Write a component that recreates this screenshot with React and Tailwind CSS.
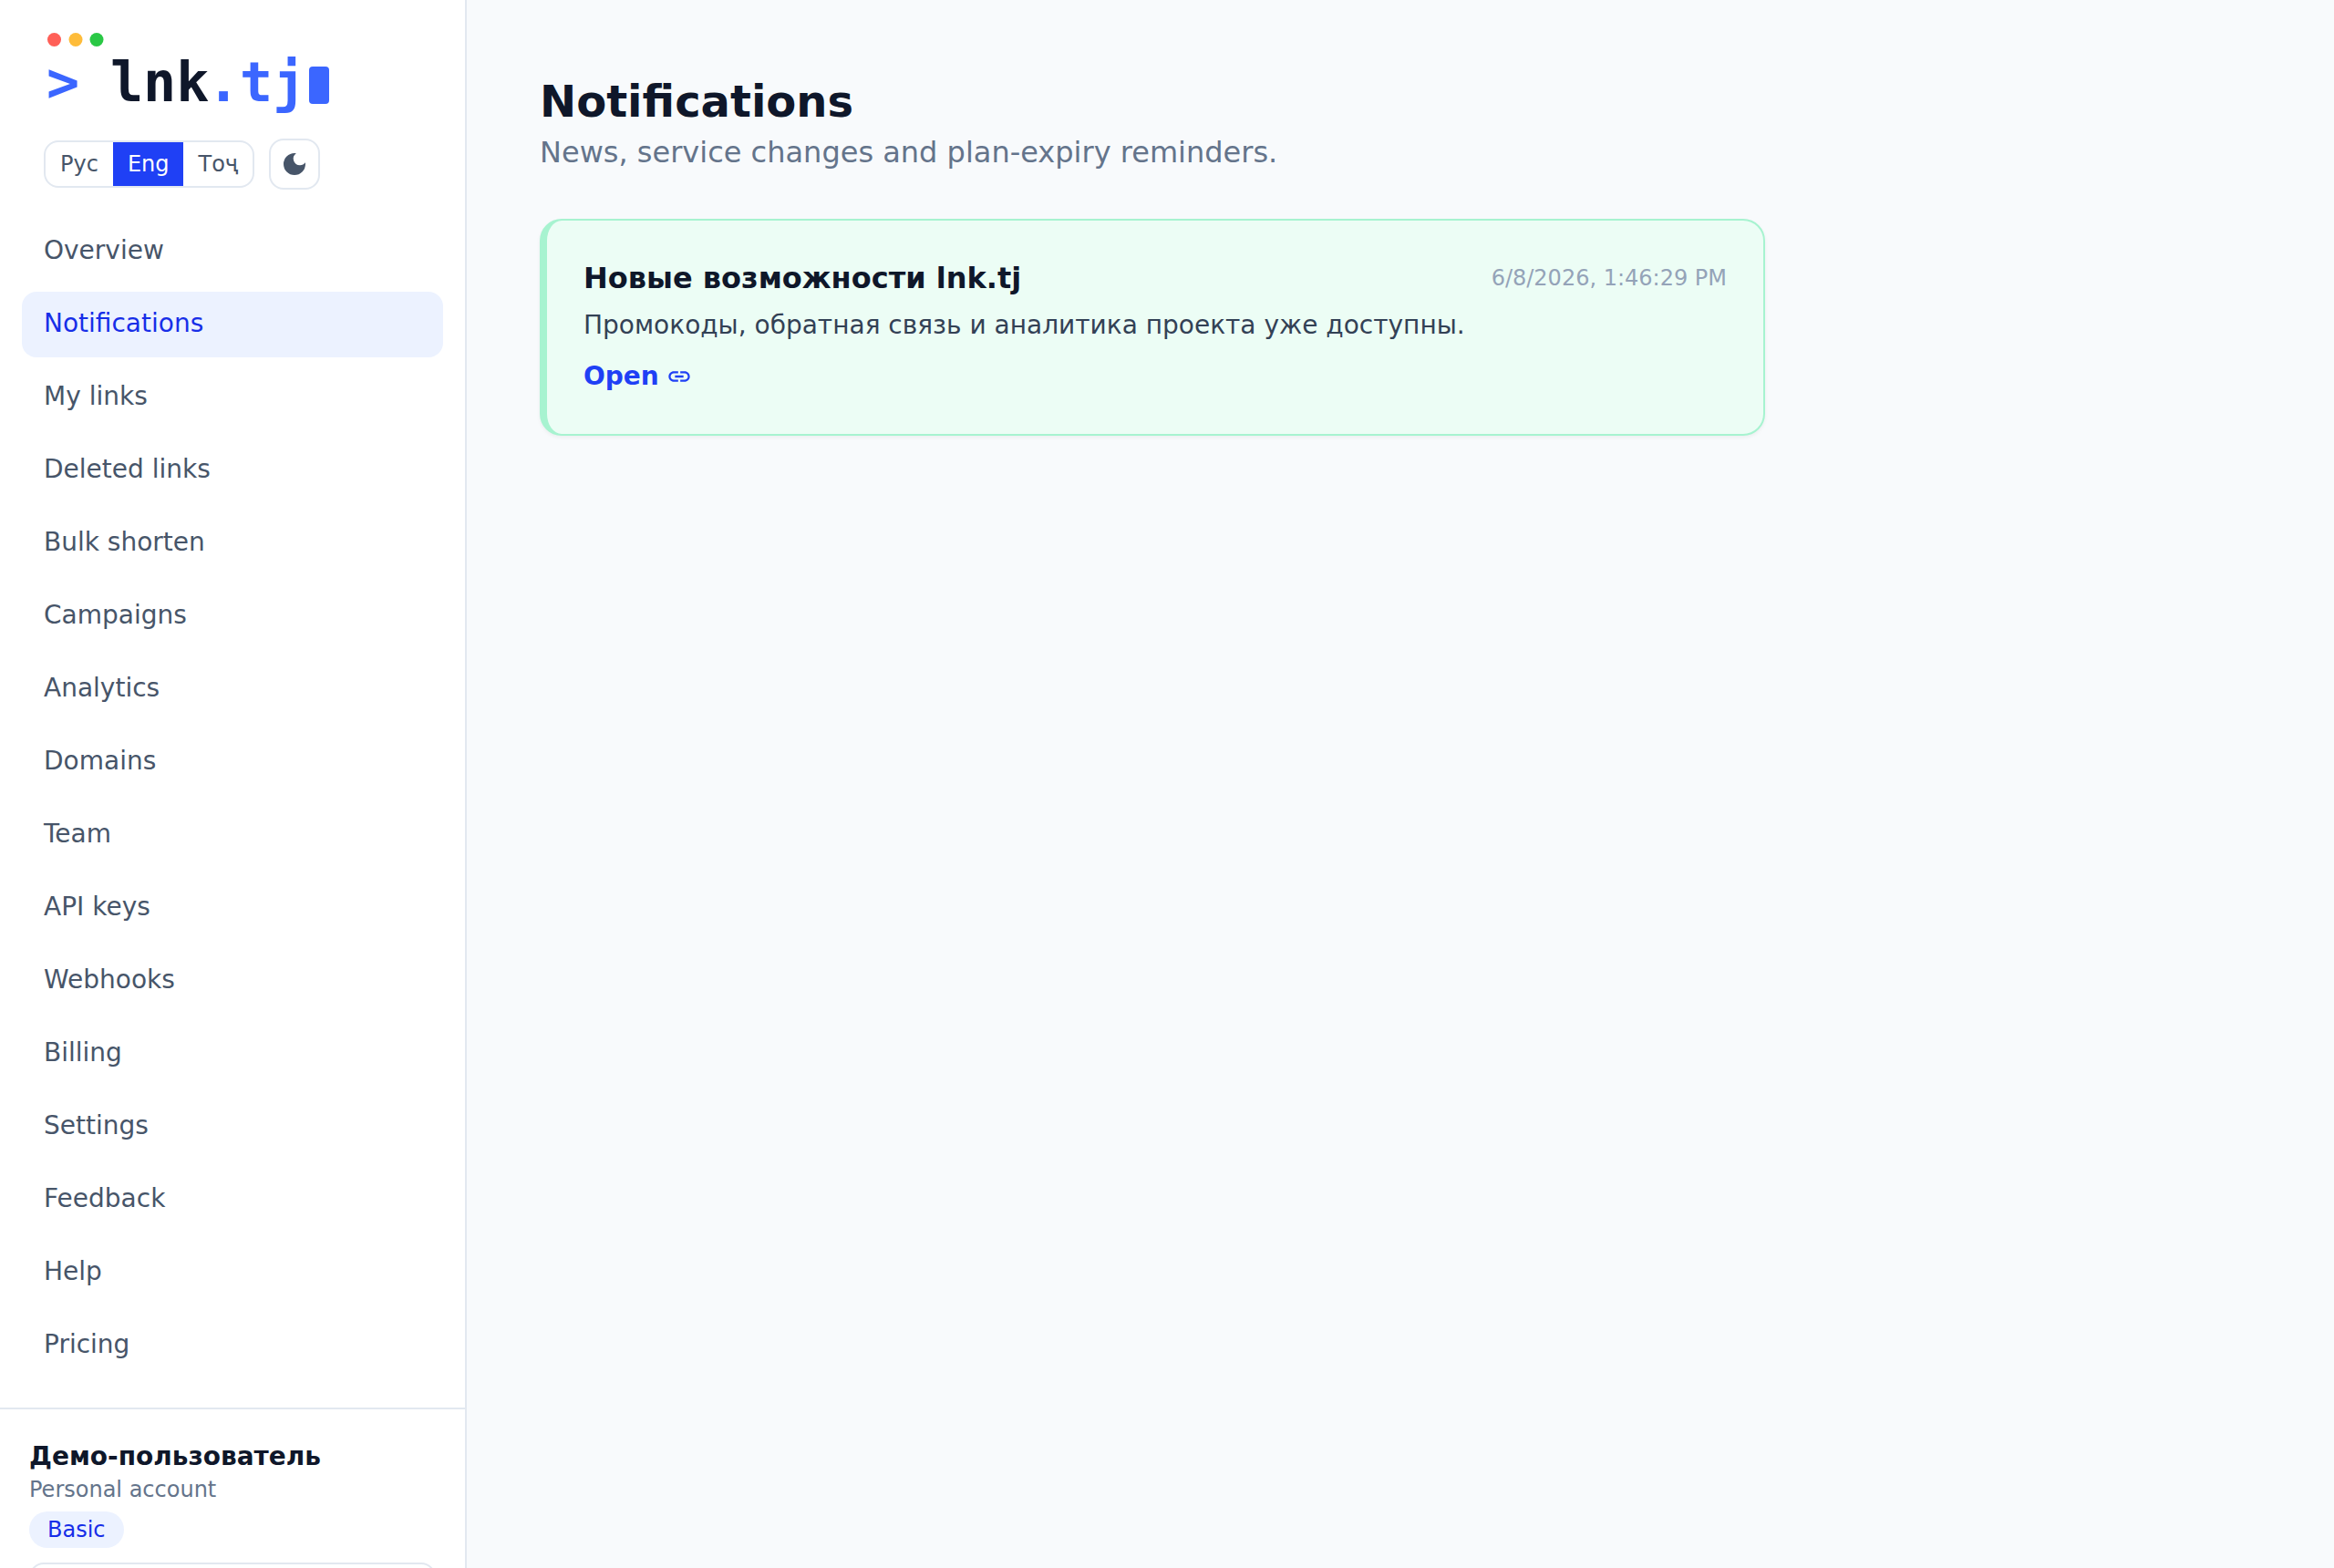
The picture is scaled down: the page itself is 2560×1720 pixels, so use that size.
import React from "react";

const NAV_ITEMS = [
  "Overview",
  "Notifications",
  "My links",
  "Deleted links",
  "Bulk shorten",
  "Campaigns",
  "Analytics",
  "Domains",
  "Team",
  "API keys",
  "Webhooks",
  "Billing",
  "Settings",
  "Feedback",
  "Help",
  "Pricing",
];

const LANGUAGES = ["Рус", "Eng", "Тоҷ"];

function Logo() {
  return (
    <a href="#home" aria-label="lnk.tj" className="flex w-fit">
      <svg
        width="320"
        height="104"
        viewBox="0 0 320 104"
        className="font-['DejaVu_Sans_Mono',monospace] text-[60px] font-bold"
      >
        <circle cx="11.5" cy="19.5" r="7.5" fill="#ff5f57" />
        <circle cx="35" cy="19.5" r="7.5" fill="#febc3a" />
        <circle cx="58" cy="19.5" r="7.5" fill="#2ac845" />
        <text x="3" y="87" fill="#3b66ff">&gt;</text>
        <text x="73" y="87" fill="#0f172a">lnk</text>
        <text x="179" y="87" fill="#3b66ff">.tj</text>
        <rect x="291" y="49" width="22" height="41" rx="4" fill="#3b66ff" />
      </svg>
    </a>
  );
}

function MoonIcon() {
  return (
    <svg viewBox="0 0 24 24" className="size-8" fill="currentColor" aria-hidden="true">
      <path d="M12 3a9 9 0 1 0 9 9c0-.46-.04-.92-.1-1.36a5.389 5.389 0 0 1-4.4 2.26 5.403 5.403 0 0 1-3.14-9.8c-.44-.06-.9-.1-1.36-.1z" />
    </svg>
  );
}

function LinkIcon() {
  return (
    <svg viewBox="0 0 24 24" className="size-7" fill="currentColor" aria-hidden="true">
      <path d="M3.9 12c0-1.71 1.39-3.1 3.1-3.1h4V7H7c-2.76 0-5 2.24-5 5s2.24 5 5 5h4v-1.9H7c-1.71 0-3.1-1.39-3.1-3.1zM8 13h8v-2H8v2zm9-6h-4v1.9h4c1.71 0 3.1 1.39 3.1 3.1s-1.39 3.1-3.1 3.1h-4V17h4c2.76 0 5-2.24 5-5s-2.24-5-5-5z" />
    </svg>
  );
}

function Sidebar() {
  return (
    <aside className="flex w-[512px] shrink-0 flex-col overflow-hidden border-r-2 border-[#e2e8f0] bg-white">
      <div className="flex shrink-0 flex-col gap-4 px-12 pt-6 pb-8">
        <Logo />
        <div className="flex items-center gap-4 pt-2">
          <div className="flex overflow-hidden rounded-2xl border-2 border-[#e2e8f0] text-[24px] leading-8">
            {LANGUAGES.map((lang) => (
              <button
                key={lang}
                type="button"
                className={
                  lang === "Eng"
                    ? "bg-[#1f40f5] px-4 py-2 text-white"
                    : "px-4 py-2 text-[#475569]"
                }
              >
                {lang}
              </button>
            ))}
          </div>
          <button
            type="button"
            aria-label="Dark theme"
            className="flex size-14 items-center justify-center rounded-2xl border-2 border-[#e2e8f0] text-[#475569]"
          >
            <MoonIcon />
          </button>
        </div>
      </div>
      <nav className="flex shrink-0 flex-col gap-2 px-6 pb-8">
        {NAV_ITEMS.map((item) => (
          <a
            key={item}
            href="#nav"
            className={
              item === "Notifications"
                ? "rounded-2xl bg-[#ecf2ff] px-6 pt-[15px] pb-[17px] text-[28px] leading-10 text-[#172ee8]"
                : "rounded-2xl px-6 pt-[15px] pb-[17px] text-[28px] leading-10 text-[#475569]"
            }
          >
            {item}
          </a>
        ))}
      </nav>
      <div className="flex shrink-0 flex-col border-t-2 border-[#e2e8f0] p-8">
        <p className="text-[28px] leading-10 font-bold text-[#0f172a]">Демо-пользователь</p>
        <p className="text-[24px] leading-8 text-[#64748b]">Personal account</p>
        <span className="mt-2 w-fit rounded-full bg-[#ecf2ff] px-5 py-1 text-[24px] leading-8 text-[#172ee8]">
          Basic
        </span>
        <button
          type="button"
          aria-label="Account"
          className="mt-4 h-16 rounded-2xl border-2 border-[#e2e8f0]"
        />
      </div>
    </aside>
  );
}

export default function App() {
  return (
    <div className="flex h-screen overflow-hidden bg-[#f8fafc] font-['DejaVu_Sans',sans-serif] text-[#0f172a]">
      <Sidebar />
      <main className="min-w-0 flex-1 px-20 pt-[79px] pb-20">
        <h1 className="text-[48px] leading-16 font-bold">Notifications</h1>
        <p className="text-[32px] leading-12 text-[#64748b]">
          News, service changes and plan-expiry reminders.
        </p>
        <article className="mt-[49px] max-w-[1344px] rounded-3xl border-2 border-l-8 border-[#a7f3d0] bg-[#ecfdf5] px-10 pt-[39px] pb-[43px] shadow-[0_2px_4px_rgba(0,0,0,0.05)]">
          <div className="flex items-center justify-between gap-6">
            <h2 className="text-[32px] leading-12 font-bold">Новые возможности lnk.tj</h2>
            <time className="text-[24px] leading-8 text-[#94a3b8]">6/8/2026, 1:46:29 PM</time>
          </div>
          <p className="mt-2 text-[28px] leading-10 text-[#334155]">
            Промокоды, обратная связь и аналитика проекта уже доступны.
          </p>
          <a
            href="#open"
            className="mt-4 flex w-fit items-center gap-2 text-[28px] leading-10 font-bold text-[#1f40f5]"
          >
            Open
            <LinkIcon />
          </a>
        </article>
      </main>
    </div>
  );
}
